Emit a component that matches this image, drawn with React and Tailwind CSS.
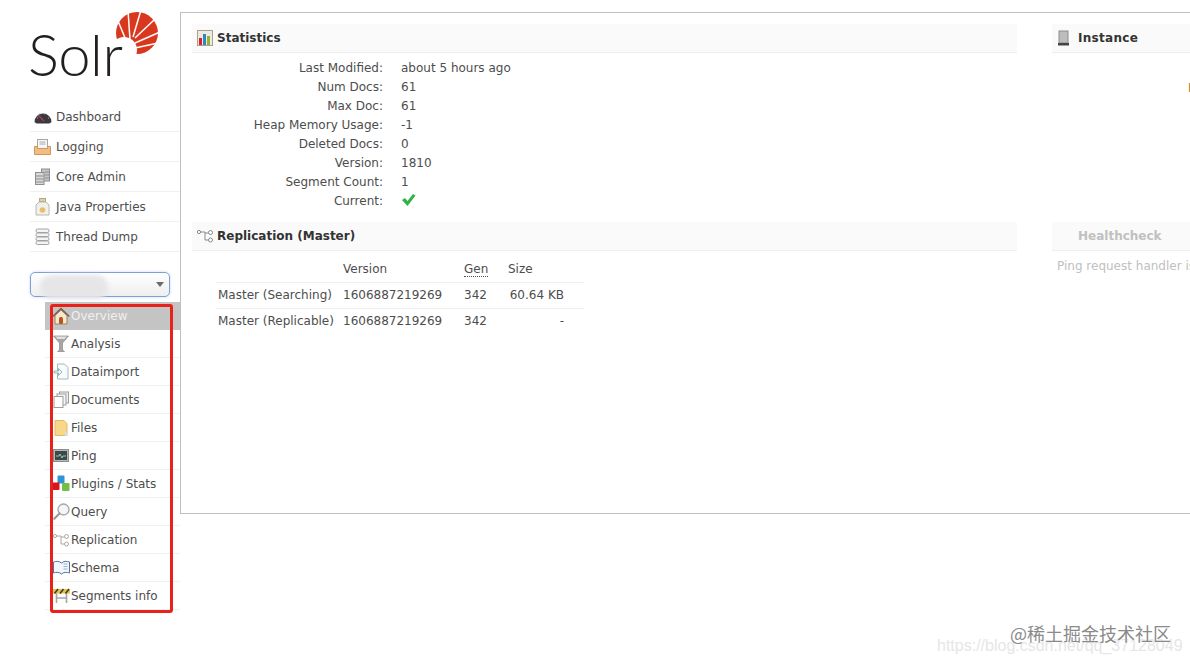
import React from "react";

const font = "font-['DejaVu_Sans','Liberation_Sans',sans-serif]";

function SolrLogo() {
  const rays = [
    [128, 45, 118, 21],
    [130, 40, 128, 10],
    [133, 37, 141, 10],
    [135, 38, 154, 20],
    [135, 43, 160, 32],
    [135, 48, 158, 43],
  ];
  return (
    <div className="relative h-[90px]">
      <svg className="absolute left-[110px] top-[4px]" width="54" height="54" viewBox="110 8 54 54">
        <circle cx="137" cy="33" r="21" fill="#d9381e" />
        <circle cx="124" cy="50" r="13" fill="#fff" />
        {rays.map((r, i) => (
          <line key={i} x1={r[0]} y1={r[1]} x2={r[2]} y2={r[3]} stroke="#fff" strokeWidth="1.5" />
        ))}
      </svg>
      <span className="absolute left-[28px] top-[15px] font-['Lato',sans-serif] font-light text-[58px] leading-[70px] tracking-[-0.5px] text-[#231f20]">
        Solr
      </span>
    </div>
  );
}

function IconGauge() {
  return (
    <svg width="18" height="14" viewBox="0 0 18 14">
      <path d="M0.500 12a8.500 8.500 0 0 1 17 0l-2 1.500H2.500z" fill="#3a3940" />
      <path d="M4 5l6 6" stroke="#b5404a" strokeWidth="1.200" />
      <path d="M3 8h1M6 3.500v1M11 3.500v1M14 8h1" stroke="#a9a9b0" strokeWidth="1" />
    </svg>
  );
}
function IconInbox() {
  return (
    <svg width="17" height="16" viewBox="0 0 17 16">
      <rect x="3.500" y="0.500" width="10" height="9" fill="#f7f7f7" stroke="#a5a5a5" />
      <path d="M5.500 3h6M5.500 5h6" stroke="#a8a8a8" />
      <path d="M0.500 7.500h3v2h10v-2h3v8h-16z" fill="#f0bd85" stroke="#d1965a" />
    </svg>
  );
}
function IconServers() {
  return (
    <svg width="15" height="17" viewBox="0 0 15 17">
      <rect x="6.500" y="1" width="8" height="12" fill="#c4c4c4" stroke="#8e8e8e" />
      <rect x="0.500" y="4.500" width="8.500" height="12" fill="#d8d8d8" stroke="#8e8e8e" />
      <path d="M1 8h7.500M1 11h7.500M1 14h7.500M10 4h4M10 7h4M10 10h4" stroke="#8e8e8e" />
    </svg>
  );
}
function IconJar() {
  return (
    <svg width="15" height="18" viewBox="0 0 15 18">
      <rect x="4.500" y="0.500" width="6" height="3" fill="#ddd0a4" stroke="#b3a77c" />
      <path d="M4 4h7l3 3v10H1V7z" fill="#f1f1ec" stroke="#b8b8b8" />
      <circle cx="7.500" cy="12" r="2.800" fill="#e9bd6c" />
    </svg>
  );
}
function IconStack() {
  return (
    <svg width="15" height="17" viewBox="0 0 15 17">
      {[1, 5, 9, 13].map((y) => (
        <rect key={y} x="1" y={y} width="13" height="3.500" rx="1.500" fill="#f4f4f4" stroke="#a2a2a2" />
      ))}
    </svg>
  );
}
function IconHome() {
  return (
    <svg width="18" height="18" viewBox="0 0 18 18">
      <path d="M3 8.500L9 3l6 5.500V17H3z" fill="#f6e7cd" stroke="#9c8266" />
      <path d="M0.800 9.500L9 1.500l8.200 8" fill="none" stroke="#75604e" strokeWidth="1.600" />
      <rect x="7" y="10" width="4" height="7" rx="1.500" fill="#b4561f" />
    </svg>
  );
}
function IconFunnel() {
  return (
    <svg width="16" height="17" viewBox="0 0 16 17">
      <path d="M0.500 1h15L9.500 8v7l2 1.500H4.500l2-1.500V8z" fill="#a5a5a5" stroke="#8a8a8a" strokeWidth="0.700" />
      <path d="M2 1.500h12L11.500 4h-7z" fill="#e0e0e0" />
    </svg>
  );
}
function IconImport() {
  return (
    <svg width="16" height="17" viewBox="0 0 16 17">
      <path d="M4.500 1h7l3.500 3.500V16h-10.500z" fill="#f8fbfb" stroke="#9dbcbc" />
      <path d="M1 8h4.500V5.500l3.500 3.500-3.500 3.500V10H1z" fill="#eef5f5" stroke="#7fa3a8" strokeWidth="0.800" />
    </svg>
  );
}
function IconDocs() {
  return (
    <svg width="16" height="17" viewBox="0 0 16 17">
      <rect x="6.500" y="1" width="9" height="11" fill="#eef1f1" stroke="#9d9d9d" />
      <rect x="4" y="3" width="9" height="11" fill="#f4f6f6" stroke="#9d9d9d" />
      <rect x="1" y="5.500" width="9" height="11" fill="#fff" stroke="#9d9d9d" />
    </svg>
  );
}
function IconFile() {
  return (
    <svg width="14" height="18" viewBox="0 0 14 18">
      <path d="M1 1.500h9l3 3v12H1z" fill="#f8d888" stroke="#e0bb65" />
      <rect x="10.500" y="12" width="3" height="5" rx="1.500" fill="#dcdcd4" />
    </svg>
  );
}
function IconMonitor() {
  return (
    <svg width="16" height="13" viewBox="0 0 16 13">
      <rect x="0.500" y="0.500" width="15" height="12" fill="#b5b9b9" stroke="#8c8c8c" />
      <rect x="2" y="2" width="12" height="9" fill="#3a4a4a" />
      <path d="M3 7h3l1-2 2 4 1-2h3" fill="none" stroke="#b8e0c8" strokeWidth="0.800" />
    </svg>
  );
}
function IconBlocks() {
  return (
    <svg width="18" height="17" viewBox="0 0 18 17">
      <rect x="5.500" y="0.500" width="7" height="8" rx="1" fill="#2f93d8" />
      <rect x="0.500" y="7.500" width="7" height="7.500" rx="1" fill="#d8141c" />
      <rect x="10" y="8" width="7.500" height="8" rx="1" fill="#72bf44" />
    </svg>
  );
}
function IconLens() {
  return (
    <svg width="17" height="17" viewBox="0 0 17 17">
      <circle cx="10.500" cy="6.500" r="5.500" fill="#f3f5f6" stroke="#a4a4a4" strokeWidth="1.300" />
      <path d="M6.500 10.500l-5.200 5.200" stroke="#9a9a9a" strokeWidth="2.200" strokeLinecap="round" />
    </svg>
  );
}
function IconReplication({ dark }) {
  const c = dark ? "#8a8a8a" : "#a8a8a8";
  return (
    <svg width="16" height="14" viewBox="0 0 16 14">
      <path d="M3 3h5v8h4M8 4h4" fill="none" stroke={c} />
      <circle cx="2" cy="3" r="1.600" fill="#fff" stroke={c} />
      <circle cx="13.500" cy="3.500" r="2" fill="#fff" stroke={c} />
      <circle cx="13.500" cy="11" r="2" fill="#fff" stroke={c} />
    </svg>
  );
}
function IconBook() {
  return (
    <svg width="17" height="15" viewBox="0 0 17 15">
      <path d="M8.500 3C6.500 1 3 1 0.500 2v11c2.500-1 6-1 8 1 2-2 5.500-2 8-1V2c-2.500-1-6-1-8 1z" fill="#f2f6fa" stroke="#4d72a6" />
      <path d="M10.500 4h4M10.500 6.500h4M10.500 9h4" stroke="#9fb2c6" />
    </svg>
  );
}
function IconBarrier() {
  return (
    <svg width="17" height="15" viewBox="0 0 17 15">
      <path d="M3.500 5v10M13.500 5v10M3.500 10h10" stroke="#a5a5a5" strokeWidth="1.600" />
      <rect x="0" y="1" width="17" height="4.500" fill="#e4c247" />
      <path d="M1.500 5.500l3.500-4.500M7 5.500l3.500-4.500M12.500 5.500L16 1" stroke="#3a3a3a" strokeWidth="1.500" />
    </svg>
  );
}
function IconChart() {
  return (
    <svg width="16" height="16" viewBox="0 0 16 16">
      <rect x="0.500" y="0.500" width="15" height="15" fill="#efeadd" stroke="#a89f90" />
      <rect x="2" y="8" width="3" height="7" fill="#d8232a" />
      <rect x="6" y="4" width="3" height="11" fill="#2c86c8" />
      <rect x="10" y="6" width="3" height="9" fill="#8cb53a" />
    </svg>
  );
}
function IconTower() {
  return (
    <svg width="13" height="16" viewBox="0 0 13 16">
      <rect x="2" y="1" width="9" height="12" fill="#bdbdbd" stroke="#8c8c8c" />
      <rect x="1" y="13" width="11" height="2.500" fill="#444" />
    </svg>
  );
}
function IconCheck() {
  return (
    <svg className="-mt-[3px]" width="15" height="14" viewBox="0 0 15 14">
      <path d="M1 7l3-2 2.500 3L12 1l2.500 1.500L6.500 13z" fill="#2fb344" />
    </svg>
  );
}

const mainLinks = [
  ["Dashboard", IconGauge],
  ["Logging", IconInbox],
  ["Core Admin", IconServers],
  ["Java Properties", IconJar],
  ["Thread Dump", IconStack],
];

const coreLinks = [
  ["Overview", IconHome],
  ["Analysis", IconFunnel],
  ["Dataimport", IconImport],
  ["Documents", IconDocs],
  ["Files", IconFile],
  ["Ping", IconMonitor],
  ["Plugins / Stats", IconBlocks],
  ["Query", IconLens],
  ["Replication", IconReplication],
  ["Schema", IconBook],
  ["Segments info", IconBarrier],
];

const stats = [
  ["Last Modified:", "about 5 hours ago"],
  ["Num Docs:", "61"],
  ["Max Doc:", "61"],
  ["Heap Memory Usage:", "-1"],
  ["Deleted Docs:", "0"],
  ["Version:", "1810"],
  ["Segment Count:", "1"],
  ["Current:", <IconCheck key="check" />],
];

function Sidebar() {
  return (
    <aside className="relative w-[180px] shrink-0 pt-[4px]">
      <SolrLogo />
      <ul className="ml-[30px] mt-[8px]">
        {mainLinks.map(([label, Icon]) => (
          <li key={label} className="flex h-[30px] items-center border-b border-[#f0f0f0] text-[12px] text-[#4d4d4d]">
            <span className="flex w-[26px] shrink-0 justify-center pl-[1px] pr-[2px]">
              <Icon />
            </span>
            {label}
          </li>
        ))}
      </ul>
      <div className="relative ml-[30px] mt-[20px] flex h-[25px] w-[140px] items-center justify-end rounded-[5px] border border-[#7e9fdc] bg-gradient-to-b from-white to-[#eeeeee] pr-[5px] shadow-[0_0_3px_#c5d5f0]">
        <span className="h-0 w-0 border-x-[4px] border-t-[5px] border-x-transparent border-t-[#6b6b6b]" />
        <span className="absolute left-[9px] top-[2px] h-[24px] w-[68px] rounded-full bg-[#e6e6e8] blur-[2px]" />
      </div>
      <ul className="ml-[45px] mt-[5px]">
        {coreLinks.map(([label, Icon], i) => (
          <li
            key={label}
            className={
              i === 0
                ? "flex h-[28px] items-center bg-[#c4c4c4] pl-[6px] text-[12px] text-[#f0f0f0]"
                : "flex h-[28px] items-center border-b border-[#f0f0f0] pl-[6px] text-[12px] text-[#4d4d4d]"
            }
          >
            <span className="flex w-[20px] shrink-0 justify-center">
              <Icon />
            </span>
            {label}
          </li>
        ))}
      </ul>
      <div className="pointer-events-none absolute left-[50px] top-[304px] h-[309px] w-[123px] rounded-[3px] border-[3px] border-[#e8211a]" />
    </aside>
  );
}

function BlockHeader({ icon, muted, children }) {
  return (
    <div
      className={
        "flex h-[29px] items-center border-b border-[#eeeeee] bg-[#fafafa] pl-[5px] text-[12px] font-bold " +
        (muted ? "text-[#c0c0c0]" : "text-[#333333]")
      }
    >
      {icon && <span className="flex w-[21px] shrink-0 justify-start">{icon}</span>}
      {children}
    </div>
  );
}

function Statistics() {
  return (
    <section>
      <BlockHeader icon={<IconChart />}>
        <span className="-ml-[1px]">Statistics</span>
      </BlockHeader>
      <div className="mt-[6px] grid grid-cols-[191px_1fr] gap-x-[18px] text-[12px] leading-[19px] text-[#4d4d4d]">
        {stats.map(([label, value]) => (
          <React.Fragment key={label}>
            <div className="text-right">{label}</div>
            <div className="flex h-[19px] items-center text-[#4d4d4d]">{value}</div>
          </React.Fragment>
        ))}
      </div>
    </section>
  );
}

function Replication() {
  const rows = [
    ["Master (Searching)", "1606887219269", "342", "60.64 KB"],
    ["Master (Replicable)", "1606887219269", "342", "-"],
  ];
  return (
    <section className="mt-[11px]">
      <BlockHeader icon={<IconReplication dark />}>
        <span className="-ml-[1px]">Replication (Master)</span>
      </BlockHeader>
      <table className="ml-[24px] mt-[5px] w-[368px] table-fixed text-[12px] text-[#4d4d4d]">
        <colgroup>
          <col className="w-[125px]" />
          <col className="w-[121px]" />
          <col className="w-[44px]" />
          <col className="w-[78px]" />
        </colgroup>
        <thead>
          <tr className="h-[26px] border-b border-[#eeeeee]">
            <th />
            <th className="pl-[2px] text-left font-normal">Version</th>
            <th className="pl-[2px] text-left font-normal">
              <span className="border-b border-dotted border-[#4d4d4d]">Gen</span>
            </th>
            <th className="pl-[2px] text-left font-normal">Size</th>
          </tr>
        </thead>
        <tbody>
          {rows.map((row, i) => (
            <tr key={row[0]} className={i === 0 ? "h-[26px] border-b border-[#eeeeee]" : "h-[26px]"}>
              <td className="whitespace-nowrap pl-[2px]">{row[0]}</td>
              <td className="pl-[2px]">{row[1]}</td>
              <td className="pl-[2px]">{row[2]}</td>
              <td className="pr-[20px] text-right">{row[3]}</td>
            </tr>
          ))}
        </tbody>
      </table>
    </section>
  );
}

function RightColumn() {
  return (
    <div className="w-[200px] shrink-0">
      <section className="h-[198px]">
        <BlockHeader icon={<IconTower />}>
          <span className="tracking-[0.3px]">Instance</span>
        </BlockHeader>
        <div className="mt-[26px] pl-[136px] text-[12px] leading-[19px] text-[#a8781e]">I</div>
      </section>
      <section>
        <BlockHeader muted>
          <span className="pl-[21px]">Healthcheck</span>
        </BlockHeader>
        <p className="mt-[6px] whitespace-nowrap pl-[5px] text-[12px] text-[#c0c0c0]">Ping request handler is not configured</p>
      </section>
    </div>
  );
}

export default function App() {
  return (
    <div className={"relative flex h-[664px] w-[1190px] overflow-hidden bg-white " + font}>
      <Sidebar />
      <main className="mt-[12px] flex h-[502px] flex-1 gap-[35px] border-y border-l border-[#c0c0c0] pl-[11px] pt-[11px]">
        <div className="w-[825px] shrink-0">
          <Statistics />
          <Replication />
        </div>
        <RightColumn />
      </main>
      <div className="pointer-events-none absolute left-[937px] top-[634px] whitespace-nowrap font-['Liberation_Sans',sans-serif] text-[16px] text-[#e6e6e6]">
        https://blog.csdn.net/qq_37128049
      </div>
      <div className="pointer-events-none absolute left-[1010px] top-[620px] whitespace-nowrap font-['Noto_Sans_CJK_SC',sans-serif] text-[18px] text-[#8a8a8a] [text-shadow:0_0_2px_#fff]">
        @稀土掘金技术社区
      </div>
    </div>
  );
}
